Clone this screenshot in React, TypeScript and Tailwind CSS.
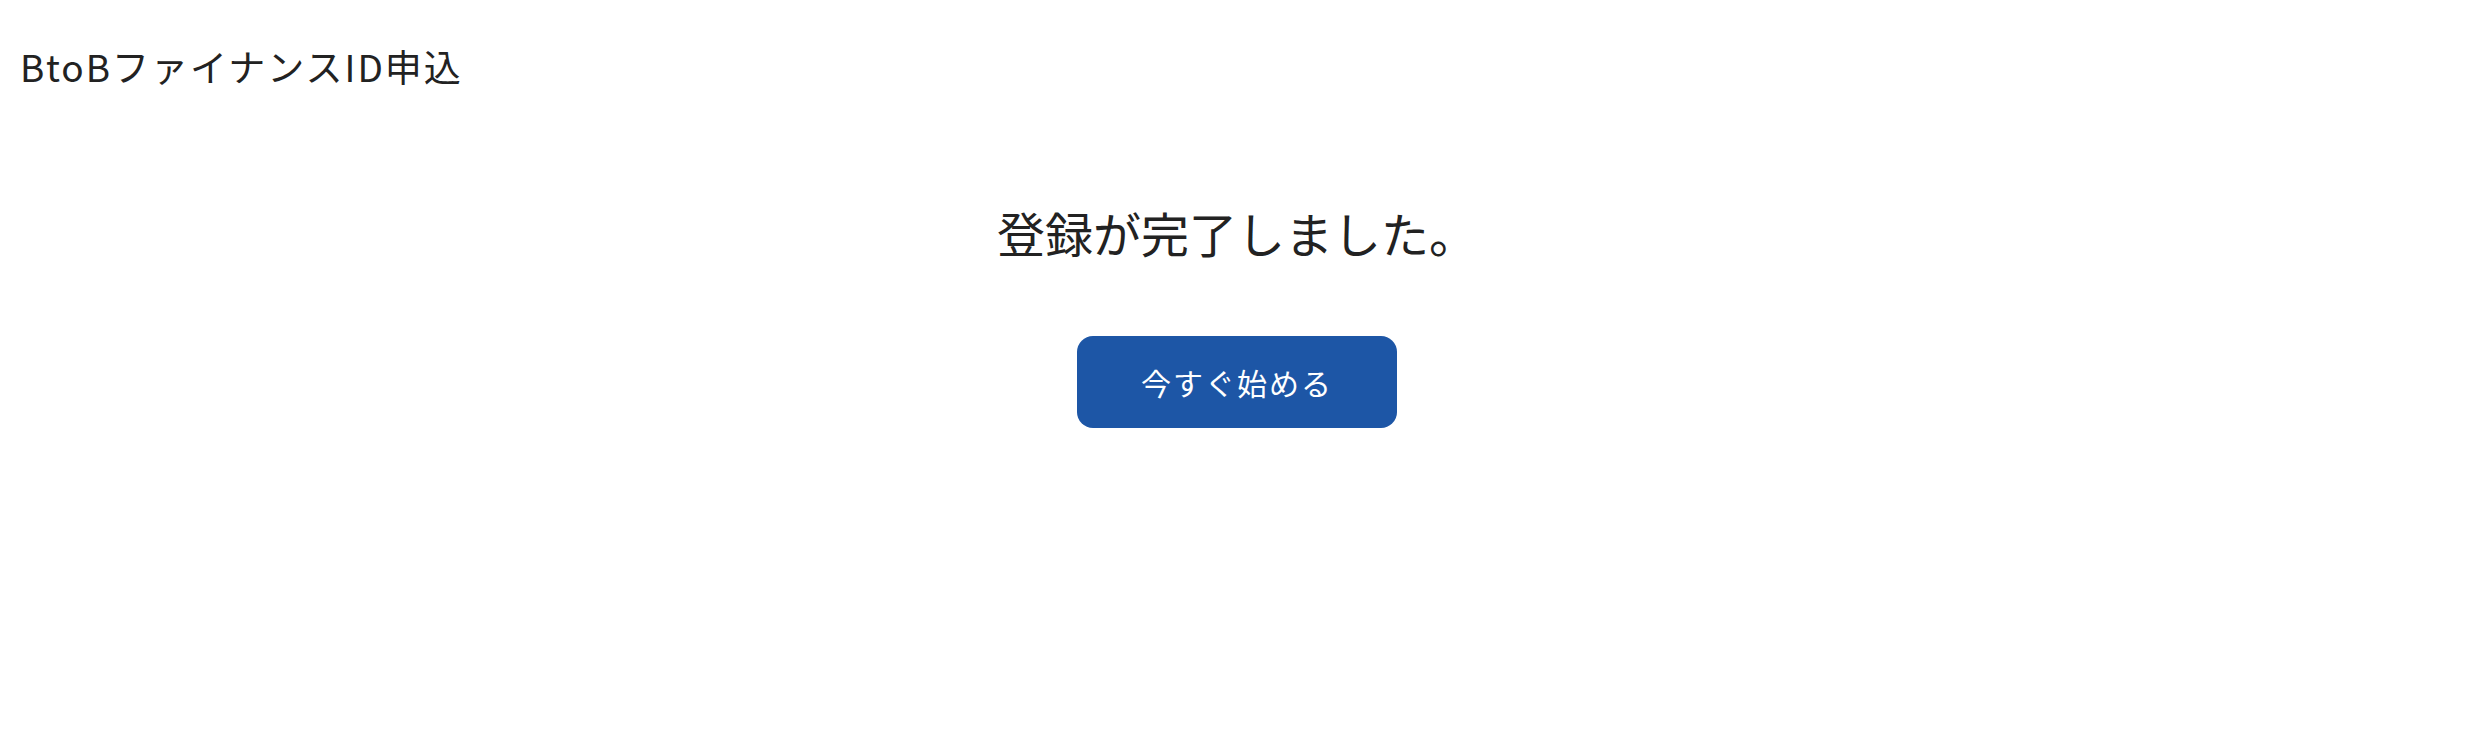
import React from "react";

export default function App() {
  return (
    <div
      className="min-h-[729px] w-full bg-white text-[#222222]"
      style={{ fontFamily: '"Noto Sans CJK JP", "Noto Sans", sans-serif' }}
    >
      <header className="px-[20px] pt-[40px]">
        <h1 className="text-[37px] leading-[52px] font-normal tracking-[2px]">BtoBファイナンスID申込</h1>
      </header>
      <main className="flex flex-col items-center pt-[104px]">
        <h2 className="text-[48px] leading-[72px] font-normal">登録が完了しました。</h2>
        <button
          type="button"
          className="mt-[68px] flex h-[92px] w-[320px] items-center justify-center rounded-[16px] bg-[#1d56a6] text-[30px] tracking-[2px] text-white"
        >
          今すぐ始める
        </button>
      </main>
    </div>
  );
}
